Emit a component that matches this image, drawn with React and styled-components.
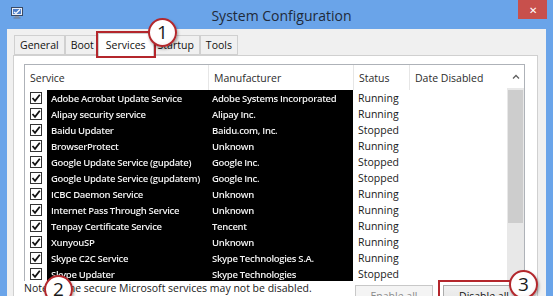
import styled, { createGlobalStyle } from "styled-components";

// msconfig 서비스 탭 화면
const SERVICES = [
  ["Adobe Acrobat Update Service", "Adobe Systems Incorporated", "Running"],
  ["Alipay security service", "Alipay Inc.", "Running"],
  ["Baidu Updater", "Baidu.com, Inc.", "Stopped"],
  ["BrowserProtect", "Unknown", "Running"],
  ["Google Update Service (gupdate)", "Google Inc.", "Stopped"],
  ["Google Update Service (gupdatem)", "Google Inc.", "Stopped"],
  ["ICBC Daemon Service", "Unknown", "Running"],
  ["Internet Pass Through Service", "Unknown", "Running"],
  ["Tenpay Certificate Service", "Tencent", "Running"],
  ["XunyouSP", "Unknown", "Running"],
  ["Skype C2C Service", "Skype Technologies S.A.", "Running"],
  ["Skype Updater", "Skype Technologies", "Stopped"],
];

const TABS = ["General", "Boot", "Services", "Startup", "Tools"];

function App() {
  return (
    <>
      <GlobalStyle />
      <Window>
        <TitleBar>
          <AppIcon viewBox="0 0 12 12">
            <rect x="0.5" y="0.5" width="11" height="8" fill="#e8eef7" stroke="#3a4a66" />
            <rect x="2" y="2" width="8" height="5" fill="#4f7fc9" />
            <path d="M3 5 L5 6.5 L9 2.5" stroke="#fff" strokeWidth="1.2" fill="none" />
            <rect x="4" y="9" width="4" height="1.5" fill="#8a94a6" />
            <rect x="2.5" y="10.5" width="7" height="1" fill="#6c768a" />
          </AppIcon>
          <Title>System Configuration</Title>
          <CloseButton>✕</CloseButton>
        </TitleBar>

        <Client>
          <TabRow>
            {TABS.map((t) => (
              <Tab key={t} $active={t === "Services"}>
                {t}
                {t === "Services" && <Marker $x={49} $y={-16}>1</Marker>}
              </Tab>
            ))}
          </TabRow>

          <Panel>
            <ListBox>
              <Table>
                <HeaderRow>
                  <HeadCell>Service</HeadCell>
                  <HeadCell $line>Manufacturer</HeadCell>
                  <HeadCell $line>Status</HeadCell>
                  <HeadCell $line>Date Disabled</HeadCell>
                </HeaderRow>
                {SERVICES.map(([name, maker, status]) => (
                  <Row key={name}>
                    <CheckCell>
                      <CheckBox>
                        <svg viewBox="0 0 10 10" width="10" height="10">
                          <path d="M1.5 5 L4 7.8 L8.8 1.8" stroke="#111" strokeWidth="1.8" fill="none" />
                        </svg>
                      </CheckBox>
                    </CheckCell>
                    <MaskCell>{name}</MaskCell>
                    <MaskCell>{maker}</MaskCell>
                    <StatusCell>{status}</StatusCell>
                    <span />
                  </Row>
                ))}
              </Table>
              <ScrollBar>
                <ScrollArrow>
                  <svg viewBox="0 0 8 5" width="8" height="5">
                    <path d="M1 4.5 L4 1.5 L7 4.5" stroke="#606060" strokeWidth="1.3" fill="none" />
                  </svg>
                </ScrollArrow>
                <Thumb />
              </ScrollBar>
            </ListBox>

            <Footer>
              <Note>
                Note: Some secure Microsoft services may not be disabled.
                <Marker $x={20} $y={-7}>2</Marker>
              </Note>
              <Buttons>
                <Button disabled>Enable all</Button>
                <Button $marked>
                  Disable all
                  <Marker $x={65} $y={-16}>3</Marker>
                </Button>
              </Buttons>
            </Footer>
          </Panel>
        </Client>
      </Window>
    </>
  );
}

export default App;

const GlobalStyle = createGlobalStyle`
  html, body {
    margin: 0;
    padding: 0;
    overflow: hidden;
  }
  body {
    font-family: "Open Sans", "Noto Sans", sans-serif;
  }
`;

const Window = styled.div`
  width: 553px;
  height: 296px;
  background: #6aa4e9;
  display: flex;
  flex-direction: column;
  overflow: hidden;
`;

const TitleBar = styled.div`
  height: 29px;
  flex-shrink: 0;
  display: flex;
  align-items: center;
  position: relative;
  padding-left: 11px;
`;

const AppIcon = styled.svg`
  width: 12px;
  height: 12px;
  margin-top: -3px;
`;

const Title = styled.div`
  flex: 1;
  text-align: center;
  font-size: 14px;
  color: #1f2a3a;
  margin-right: 13px;
  margin-top: 1px;
`;

const CloseButton = styled.div`
  position: absolute;
  top: 0;
  right: 6px;
  width: 29px;
  height: 19px;
  background: #c8504c;
  color: #fff;
  font-size: 10px;
  display: flex;
  align-items: center;
  justify-content: center;
`;

const Client = styled.div`
  flex: 1;
  margin: 0 7px;
  background: #f0f0f0;
  padding-top: 5px;
  display: flex;
  flex-direction: column;
  min-height: 0;
`;

const TabRow = styled.div`
  display: flex;
  align-items: flex-end;
  height: 21px;
  padding-left: 7px;
  position: relative;
  z-index: 1;
`;

const Tab = styled.div`
  position: relative;
  height: ${(p) => (p.$active ? "22px" : "18px")};
  margin-bottom: ${(p) => (p.$active ? "-1px" : "0")};
  padding: 0 ${(p) => (p.$active ? "7px" : "5px")};
  margin-left: ${(p) => (p.$active ? "-2px" : "0")};
  margin-right: ${(p) => (p.$active ? "-2px" : "0")};
  display: flex;
  align-items: center;
  font-size: 10.5px;
  color: #111;
  background: ${(p) => (p.$active ? "#fff" : "#f0f0f0")};
  border: 1px solid #d0d0d0;
  border-bottom: ${(p) => (p.$active ? "none" : "1px solid #d0d0d0")};
  & + & {
    border-left: ${(p) => (p.$active ? "1px solid #d0d0d0" : "none")};
  }
  z-index: ${(p) => (p.$active ? 2 : 1)};
  outline: ${(p) => (p.$active ? "2px solid #b4262c" : "none")};
  outline-offset: 0;
`;

const Panel = styled.div`
  flex: 1;
  margin-left: 6px;
  margin-right: 8px;
  background: #fff;
  border: 1px solid #d0d0d0;
  border-bottom: none;
  padding: 8px 12px 0 10px;
  display: flex;
  flex-direction: column;
`;

const ListBox = styled.div`
  height: 216px;
  flex-shrink: 0;
  border: 1px solid #aeb2b8;
  border-bottom: none;
  display: flex;
  overflow: hidden;
`;

const Table = styled.div`
  flex: 1;
  display: flex;
  flex-direction: column;
`;

const cols = "22px 161px 145px 56px 1fr";

const HeaderRow = styled.div`
  display: grid;
  grid-template-columns: 183px 145px 56px 1fr;
  height: 25px;
  flex-shrink: 0;
`;

const HeadCell = styled.div`
  display: flex;
  align-items: center;
  padding-left: 5px;
  font-size: 10.5px;
  color: #2b2b2b;
  border-left: ${(p) => (p.$line ? "1px solid #e6e6e6" : "none")};
`;

const Row = styled.div`
  display: grid;
  grid-template-columns: ${cols};
  height: 16px;
  flex-shrink: 0;
`;

const CheckCell = styled.div`
  display: flex;
  align-items: center;
  padding-left: 5px;
`;

const CheckBox = styled.div`
  width: 12px;
  height: 12px;
  border: 1px solid #333;
  background: #fff;
  box-sizing: border-box;
  display: flex;
  align-items: center;
  justify-content: center;
`;

const MaskCell = styled.div`
  background: #000;
  color: #f2f2f2;
  font-size: 9.5px;
  font-weight: 600;
  letter-spacing: -0.3px;
  padding-left: 4px;
  display: flex;
  align-items: center;
  white-space: nowrap;
  overflow: hidden;
  filter: blur(0.35px);
`;

const StatusCell = styled.div`
  font-size: 10.5px;
  color: #1a1a1a;
  padding-left: 5px;
  display: flex;
  align-items: center;
`;

const ScrollBar = styled.div`
  width: 17px;
  flex-shrink: 0;
  background: #e8e8e8;
  display: flex;
  flex-direction: column;
`;

const ScrollArrow = styled.div`
  height: 23px;
  background: #fff;
  display: flex;
  align-items: center;
  justify-content: center;
`;

const Thumb = styled.div`
  height: 133px;
  margin: 2px 1px 0;
  background: #cdcdcd;
`;

const Footer = styled.div`
  display: flex;
  align-items: flex-start;
  padding-top: 1px;
`;

const Note = styled.div`
  position: relative;
  font-size: 10.5px;
  line-height: 13px;
  color: #1a1a1a;
  white-space: nowrap;
`;

const Buttons = styled.div`
  margin-left: auto;
  margin-top: 3px;
  display: flex;
  gap: 10px;
`;

const Button = styled.button`
  position: relative;
  width: ${(p) => (p.$marked ? "82px" : "78px")};
  height: 22px;
  font-family: inherit;
  font-size: 10.5px;
  color: ${(p) => (p.disabled ? "#8a8a8a" : "#111")};
  background: ${(p) => (p.disabled ? "#f4f4f4" : "linear-gradient(#f0f0f0, #e3e3e3)")};
  border: 1px solid ${(p) => (p.disabled ? "#c8c8c8" : "#acacac")};
  padding: 0;
  outline: ${(p) => (p.$marked ? "2px solid #b4262c" : "none")};
  outline-offset: 3px;
`;

const Marker = styled.span`
  position: absolute;
  left: ${(p) => p.$x}px;
  top: ${(p) => p.$y}px;
  width: 25px;
  height: 25px;
  border-radius: 50%;
  border: 2px solid #b3282d;
  background: radial-gradient(circle at 45% 40%, #fff 55%, #f1e6e6 100%);
  box-shadow: 1px 2px 3px rgba(0, 0, 0, 0.35);
  font-family: "Open Sans", sans-serif;
  font-size: 19px;
  line-height: 25px;
  text-align: center;
  color: #1a1a1a;
  z-index: 5;
`;
